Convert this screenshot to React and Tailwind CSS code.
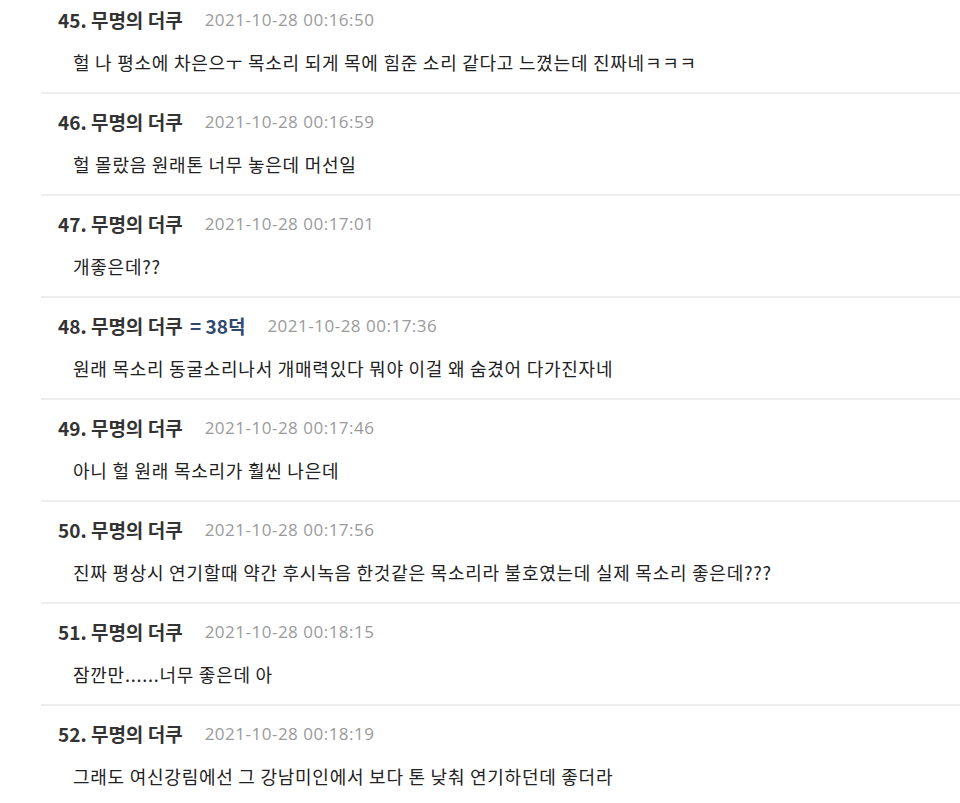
import React from "react";

const comments = [
  { no: 45, time: "2021-10-28 00:16:50", text: "헐 나 평소에 차은으ㅜ 목소리 되게 목에 힘준 소리 같다고 느꼈는데 진짜네ㅋㅋㅋ" },
  { no: 46, time: "2021-10-28 00:16:59", text: "헐 몰랐음 원래톤 너무 놓은데 머선일" },
  { no: 47, time: "2021-10-28 00:17:01", text: "개좋은데??" },
  { no: 48, time: "2021-10-28 00:17:36", text: "원래 목소리 동굴소리나서 개매력있다 뭐야 이걸 왜 숨겼어 다가진자네", reply: "= 38덕" },
  { no: 49, time: "2021-10-28 00:17:46", text: "아니 헐 원래 목소리가 훨씬 나은데" },
  { no: 50, time: "2021-10-28 00:17:56", text: "진짜 평상시 연기할때 약간 후시녹음 한것같은 목소리라 불호였는데 실제 목소리 좋은데???" },
  { no: 51, time: "2021-10-28 00:18:15", text: "잠깐만......너무 좋은데 아" },
  { no: 52, time: "2021-10-28 00:18:19", text: "그래도 여신강림에선 그 강남미인에서 보다 톤 낮춰 연기하던데 좋더라" },
];

export default function App() {
  return (
    <div className="w-[960px] h-[803px] overflow-hidden bg-white font-['Noto_Sans_CJK_KR','Noto_Sans',sans-serif]">
      <ul className="ml-[41px]">
        {comments.map((c, i) => (
          <li
            key={c.no}
            className={
              i === 0
                ? "pt-2 pb-[18px] pl-[17px] border-b-2 border-[#eeeeee]"
                : "pt-4 pb-[18px] pl-[17px] border-b-2 border-[#eeeeee]"
            }
          >
            {/* header */}
            <div className="flex items-center h-6 leading-6">
              <span className="text-[19px] font-bold text-[#333333]">
                {c.no}. 무명의 더쿠
                {c.reply && <span className="ml-[3px] text-[#2f4a6d]"> {c.reply}</span>}
              </span>
              <span className="ml-[22px] font-['Open_Sans',sans-serif] text-[17px] tracking-[0.5px] text-[#9a9a9a]">{c.time}</span>
            </div>

            {/* body */}
            <p className="mt-[18px] pl-[15px] h-6 leading-6 text-[18px] tracking-[0.75px] text-[#222222]">{c.text}</p>
          </li>
        ))}
      </ul>
    </div>
  );
}
